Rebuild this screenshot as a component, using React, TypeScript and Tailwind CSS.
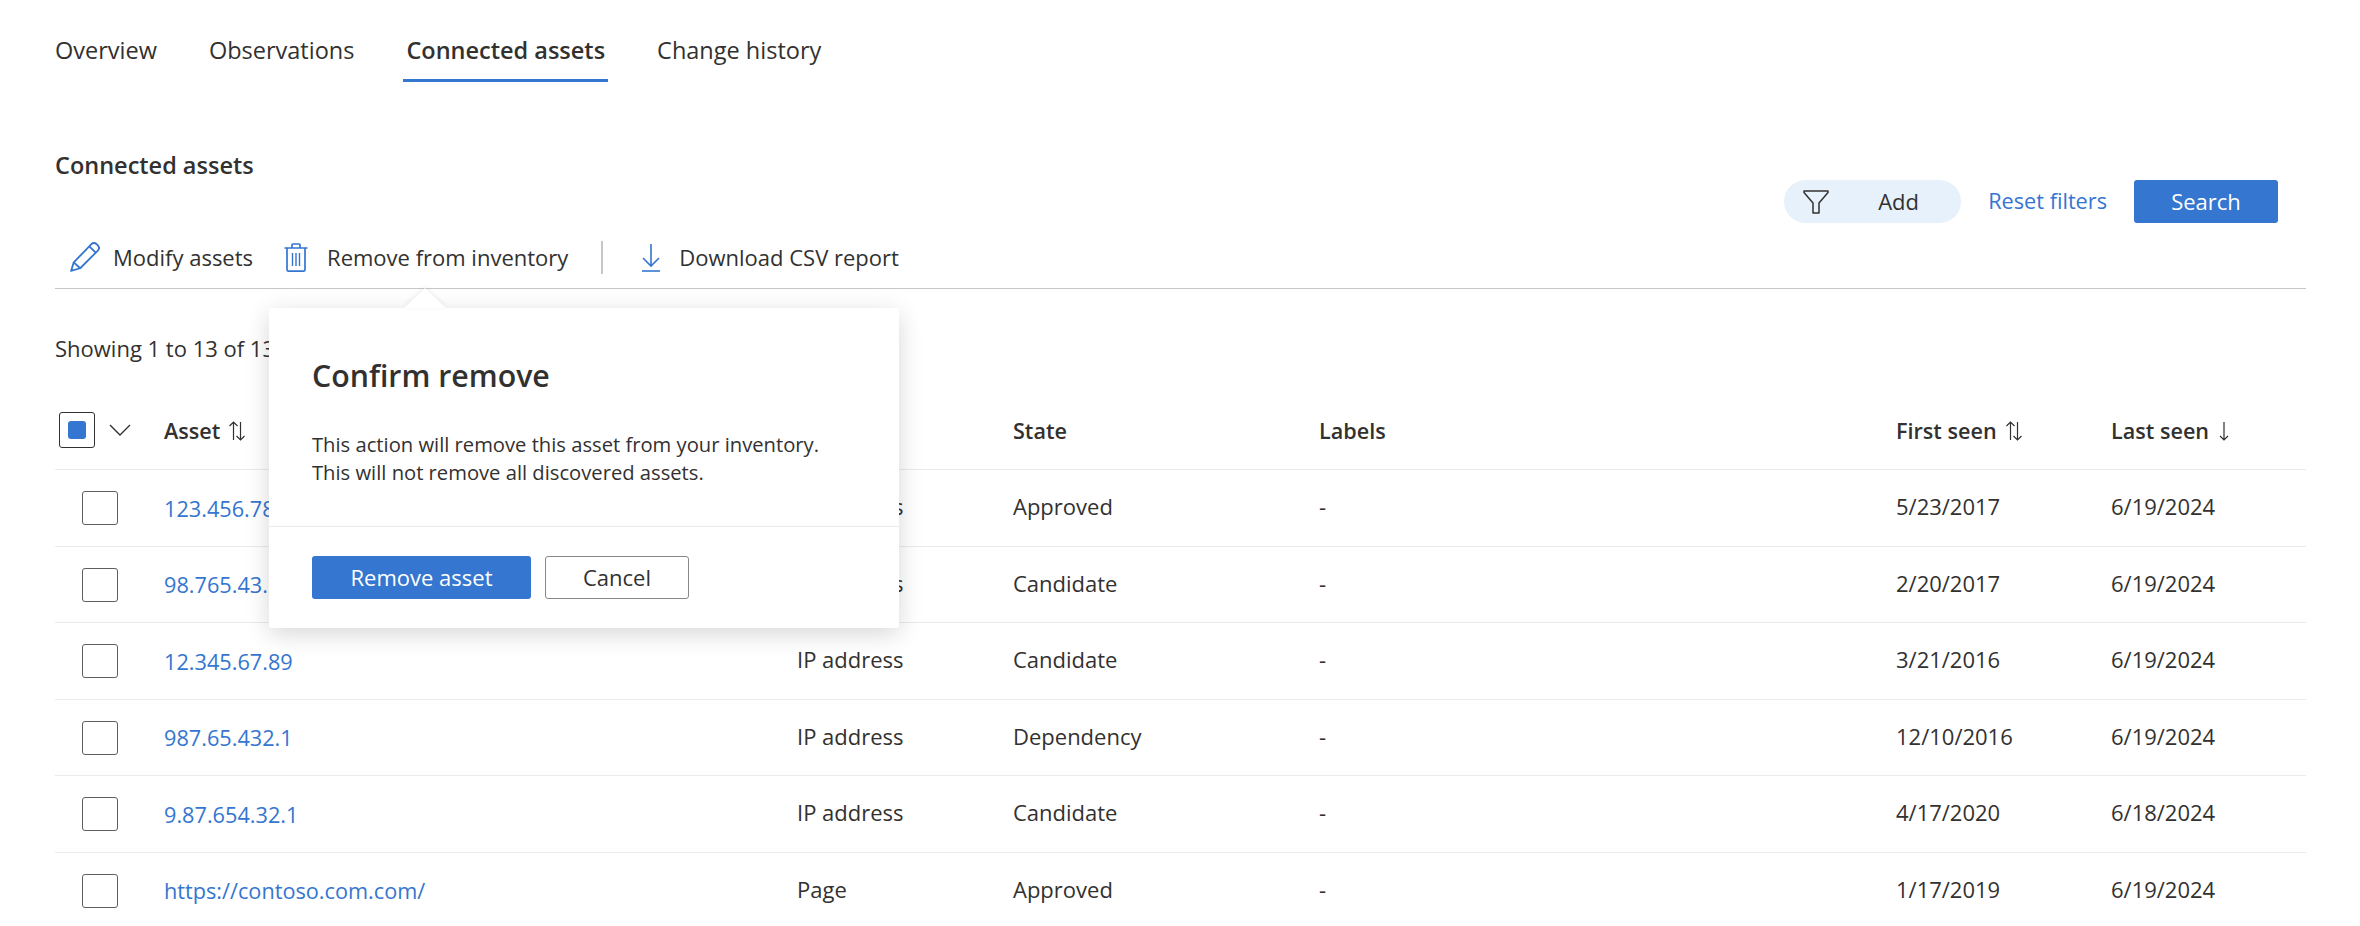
const cols = "grid grid-cols-[109px_633px_216px_306px_577px_215px_195px]";

const rows = [
  ["123.456.78.9", "IP address", "Approved", "-", "5/23/2017", "6/19/2024"],
  ["98.765.43.21", "IP address", "Candidate", "-", "2/20/2017", "6/19/2024"],
  ["12.345.67.89", "IP address", "Candidate", "-", "3/21/2016", "6/19/2024"],
  ["987.65.432.1", "IP address", "Dependency", "-", "12/10/2016", "6/19/2024"],
  ["9.87.654.32.1", "IP address", "Candidate", "-", "4/17/2020", "6/18/2024"],
  ["https://contoso.com.com/", "Page", "Approved", "-", "1/17/2019", "6/19/2024"],
];

function SortBoth() {
  return (
    <svg width="18" height="22" viewBox="0 0 18 22" fill="none" stroke="#323130" strokeWidth="1.2">
      <path d="M5.5 20V2M1.5 6l4-4 4 4" />
      <path d="M12.5 2v18M8.5 16l4 4 4-4" />
    </svg>
  );
}

function Pencil() {
  return (
    <svg width="30" height="30" viewBox="1 1 28 28" fill="none" stroke="#3476d0" strokeWidth="1.7" strokeLinejoin="round">
      <path d="M2 28l2.500-8L21 3c1.400-1.400 3.400-1.400 4.800 0l1.200 1.200c1.400 1.400 1.400 3.400 0 4.800L10.500 25.500z" />
      <path d="M4.500 20l6 5.500M19 5l6 6" />
    </svg>
  );
}

function Trash() {
  return (
    <svg width="24" height="29" viewBox="0 0 24 29" fill="none" stroke="#3476d0" strokeWidth="1.7">
      <path d="M0.500 5h23M3 5v21.500c0 1 .8 1.700 1.700 1.700h14.600c.9 0 1.700-.7 1.700-1.700V5" />
      <path d="M8 5V2c0-.6.4-1 1-1h6c.6 0 1 .4 1 1v3" />
      <path d="M8.500 10v13M12 10v13M15.500 10v13" strokeWidth="1.4" />
    </svg>
  );
}

function Download() {
  return (
    <svg width="20" height="29" viewBox="0 0 20 29" fill="none" stroke="#3476d0" strokeWidth="1.6">
      <path d="M10 1v22M2 15l8 8 8-8" />
      <path d="M1 28h18" />
    </svg>
  );
}

function Funnel() {
  return (
    <svg width="26" height="24" viewBox="0 0 26 24" fill="none" stroke="#323130" strokeWidth="1.5" strokeLinejoin="round">
      <path d="M1 1h24v1.500L16 13v10h-6V13L1 2.500z" />
    </svg>
  );
}

function Checkbox() {
  return <div className="w-[36px] h-[34px] rounded-[3px] border border-[#605e5c] bg-white" />;
}

export default function App() {
  return (
    <div className="relative h-[926px] w-[2360px] overflow-hidden bg-white pl-[55px] pr-[54px] text-[#323130] font-['Open_Sans','Noto_Sans',sans-serif] text-[22px]">
      <nav className="flex h-[82px] gap-[46px] -ml-[3px] pt-[33px] items-start">
        {["Overview", "Observations", "Connected assets", "Change history"].map((t, i) => (
          <div key={t} className={"relative h-[49px] px-[3px] leading-[34px] text-[23.500px] " + (i === 2 ? "font-semibold border-b-[3px] border-[#3476d0]" : "")}>
            {t}
          </div>
        ))}
      </nav>

      <div className="flex justify-between mt-[68px] h-[90px]">
        <h2 className="font-semibold text-[23.500px] leading-[30px]">Connected assets</h2>
        <div className="flex items-center h-[43px] mt-[30px] mr-[28px]">
          <div className="flex items-center w-[177px] h-[43px] rounded-full bg-[#e6f1fb] pl-[19px]">
            <Funnel />
            <span className="ml-[49px]">Add</span>
          </div>
          <a className="ml-[27px] text-[#3476d0] text-[21.700px]">Reset filters</a>
          <button className="ml-[27px] w-[144px] h-[43px] rounded-[3px] bg-[#3476d0] text-white font-medium">Search</button>
        </div>
      </div>

      <div className="h-[49px] flex items-start border-b border-[#c8c6c4] pl-[15px]">
        <div className="flex items-center h-[34px]">
          <Pencil />
          <span className="ml-[13px]">Modify assets</span>
          <div className="ml-[31px]"><Trash /></div>
          <span className="ml-[19px]">Remove from inventory</span>
          <div className="ml-[33px] w-[2px] h-[33px] bg-[#c8c6c4]" />
          <div className="ml-[38px]"><Download /></div>
          <span className="ml-[18px]">Download CSV report</span>
        </div>
      </div>

      <div className="mt-[42px] leading-[34px]">Showing 1 to 13 of 13 results</div>

      <div className={cols + " mt-[47px] h-[58px] items-start border-b border-[#edebe9] font-semibold text-[21.600px]"}>
        <div className="flex items-center pl-[4px]">
          <div className="flex items-center justify-center w-[36px] h-[36px] rounded-[3px] border border-[#323130]">
            <div className="w-[18px] h-[18px] rounded-[3px] bg-[#3476d0]" />
          </div>
          <svg className="ml-[14px]" width="22" height="12" viewBox="0 0 22 12" fill="none" stroke="#323130" strokeWidth="1.4">
            <path d="M1 1l10 10 10-10" />
          </svg>
        </div>
        <div className="flex items-center gap-[8px] leading-[34px] pt-[2px]">Asset <SortBoth /></div>
        <div className="leading-[34px] pt-[2px]">Type</div>
        <div className="leading-[34px] pt-[2px]">State</div>
        <div className="leading-[34px] pt-[2px]">Labels</div>
        <div className="flex items-center gap-[8px] leading-[34px] pt-[2px]">First seen <SortBoth /></div>
        <div className="flex items-center gap-[10px] leading-[34px] pt-[2px]">
          Last seen
          <svg width="10" height="22" viewBox="0 0 10 22" fill="none" stroke="#323130" strokeWidth="1.2">
            <path d="M5 2v18M1 16l4 4 4-4" />
          </svg>
        </div>
      </div>

      {rows.map((r) => (
        <div key={r[0]} className={cols + " h-[76.500px] items-center border-b border-[#edebe9]"}>
          <div className="pl-[27px] mt-[1px]"><Checkbox /></div>
          <a className="text-[#3476d0] mt-[3px] text-[21.700px]">{r[0]}</a>
          <div className="-mt-[2px]">{r[1]}</div>
          <div className="-mt-[2px]">{r[2]}</div>
          <div className="-mt-[2px]">{r[3]}</div>
          <div className="-mt-[2px]">{r[4]}</div>
          <div className="-mt-[2px]">{r[5]}</div>
        </div>
      ))}

      <div className="absolute left-[269px] top-[308px] w-[630px] h-[320px] bg-white rounded-[2px] shadow-[0_6px_24px_rgba(0,0,0,0.16)]">
        <div className="absolute left-[135px] -top-[20px] w-0 h-0 border-x-[21px] border-x-transparent border-b-[20px] border-b-white drop-shadow-[0_-1px_2px_rgba(0,0,0,0.08)]" />
        <div className="h-[219px] border-b border-[#edebe9] pl-[43px] pt-[46px]">
          <h3 className="font-semibold text-[30.300px] leading-[44px]">Confirm remove</h3>
          <p className="mt-[32px] text-[20.200px] leading-[28px]">This action will remove this asset from your inventory.<br />This will not remove all discovered assets.</p>
        </div>
        <div className="flex gap-[14px] pl-[43px] pt-[29px]">
          <button className="w-[219px] h-[43px] rounded-[3px] bg-[#3476d0] text-white font-medium">Remove asset</button>
          <button className="w-[144px] h-[43px] rounded-[3px] border border-[#8a8886] bg-white font-medium">Cancel</button>
        </div>
      </div>
    </div>
  );
}
